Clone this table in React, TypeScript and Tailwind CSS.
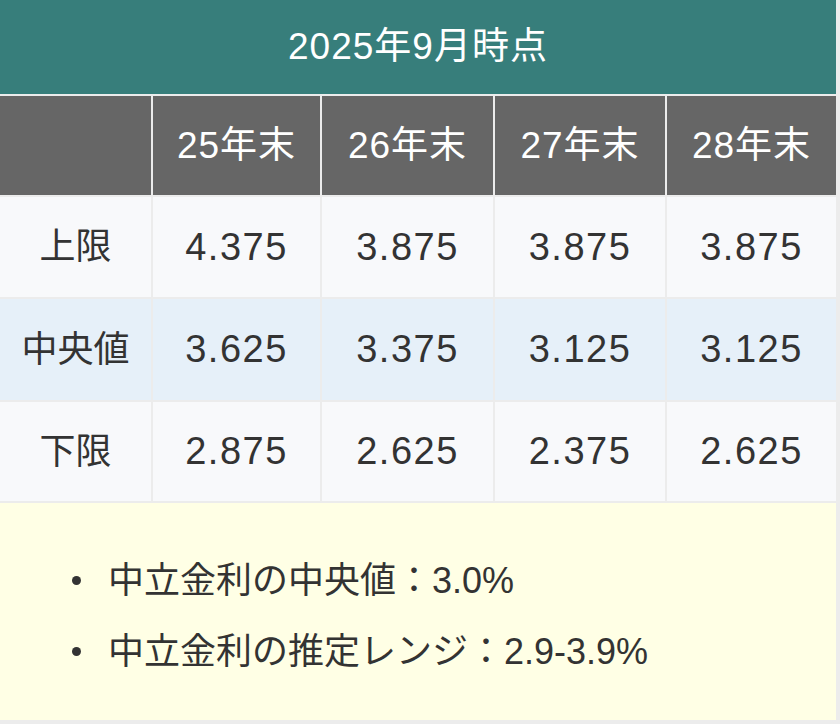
const years = ["25年末", "26年末", "27年末", "28年末"];

const rows = [
  { label: "上限", values: ["4.375", "3.875", "3.875", "3.875"], highlight: false },
  { label: "中央値", values: ["3.625", "3.375", "3.125", "3.125"], highlight: true },
  { label: "下限", values: ["2.875", "2.625", "2.375", "2.625"], highlight: false },
];

const notes = ["中立金利の中央値：3.0%", "中立金利の推定レンジ：2.9-3.9%"];

export default function App() {
  return (
    <div
      className="w-[840px] h-[724px] bg-[#ececec] pr-[4px] pb-[4px] text-[36px] text-[#333]"
      style={{ fontFamily: '"Liberation Sans", "Noto Sans CJK JP", sans-serif' }}
    >
      <div className="grid grid-cols-[151px_167px_171px_170px_169px] grid-rows-[94px_99px_100px_101px_99px_217px] gap-[2px]">
        <div className="col-span-5 bg-[#377e7b] text-white text-[37px] tracking-[1px] flex items-center justify-center">
          2025年9月時点
        </div>

        <div className="bg-[#666666]" />
        {years.map((y) => (
          <div key={y} className="bg-[#666666] text-white text-[37px] tracking-[1px] flex items-center justify-center">
            {y}
          </div>
        ))}

        {rows.map((row) => (
          <>
            <div
              key={row.label}
              className={`${row.highlight ? "bg-[#e6f0f9]" : "bg-[#f8f9fb]"} flex items-center justify-center`}
            >
              {row.label}
            </div>
            {row.values.map((v, i) => (
              <div
                key={row.label + i}
                className={`${row.highlight ? "bg-[#e6f0f9]" : "bg-[#f8f9fb]"} text-[38px] tracking-[1.5px] flex items-center justify-center`}
              >
                {v}
              </div>
            ))}
          </>
        ))}

        <div className="col-span-5 bg-[#ffffe5] pt-[42px] pb-[34px]">
          <ul>
            {notes.map((n) => (
              <li key={n} className="flex items-center leading-[71px]">
                <span className="ml-[72px] mr-[27px] w-[9px] h-[9px] rounded-full bg-[#333]" />
                <span>{n}</span>
              </li>
            ))}
          </ul>
        </div>
      </div>
    </div>
  );
}
